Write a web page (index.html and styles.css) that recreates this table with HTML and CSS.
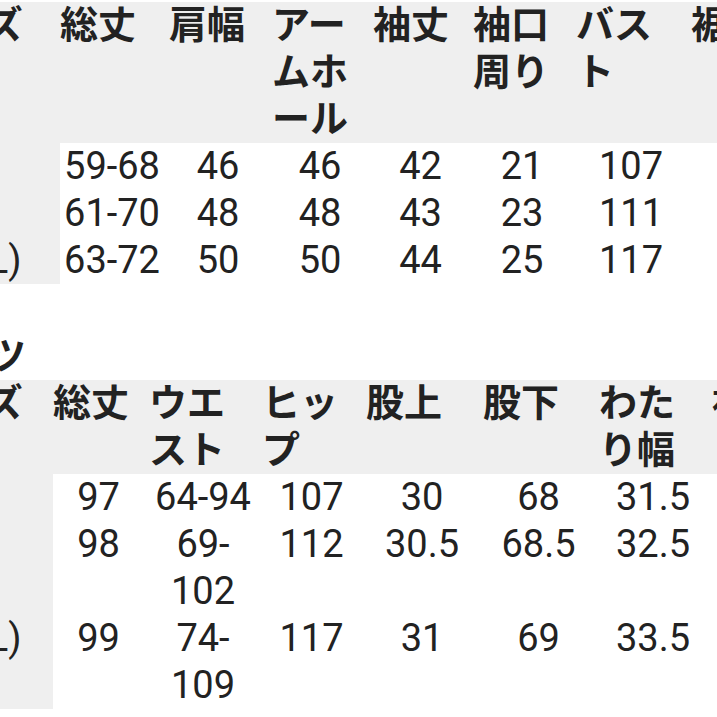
FILE: index.html
```html
<!DOCTYPE html>
<html lang="ja">
<head>
<meta charset="utf-8">
<title>サイズ表</title>
<link rel="stylesheet" href="styles.css">
</head>
<body>
<main class="page">
  <section class="size-table size-table--tops">
    <div class="cell head label">サイズ</div>
    <div class="cell head">総丈</div>
    <div class="cell head">肩幅</div>
    <div class="cell head">アームホール</div>
    <div class="cell head">袖丈</div>
    <div class="cell head">袖口周り</div>
    <div class="cell head">バスト</div>
    <div class="cell head">裾周り</div>

    <div class="cell label">S</div>
    <div class="cell">59-68</div>
    <div class="cell">46</div>
    <div class="cell">46</div>
    <div class="cell">42</div>
    <div class="cell">21</div>
    <div class="cell">107</div>
    <div class="cell">110</div>

    <div class="cell label">M</div>
    <div class="cell">61-70</div>
    <div class="cell">48</div>
    <div class="cell">48</div>
    <div class="cell">43</div>
    <div class="cell">23</div>
    <div class="cell">111</div>
    <div class="cell">114</div>

    <div class="cell label">XL(LL)</div>
    <div class="cell">63-72</div>
    <div class="cell">50</div>
    <div class="cell">50</div>
    <div class="cell">44</div>
    <div class="cell">25</div>
    <div class="cell">117</div>
    <div class="cell">120</div>
  </section>

  <h2 class="section-title">パンツ</h2>

  <section class="size-table size-table--pants">
    <div class="cell head label">サイズ</div>
    <div class="cell head">総丈</div>
    <div class="cell head">ウエスト</div>
    <div class="cell head">ヒップ</div>
    <div class="cell head">股上</div>
    <div class="cell head">股下</div>
    <div class="cell head">わたり幅</div>
    <div class="cell head">裾幅</div>

    <div class="cell label">S</div>
    <div class="cell">97</div>
    <div class="cell">64-94</div>
    <div class="cell">107</div>
    <div class="cell">30</div>
    <div class="cell">68</div>
    <div class="cell">31.5</div>
    <div class="cell">22</div>

    <div class="cell label">M</div>
    <div class="cell">98</div>
    <div class="cell">69-<wbr>102</div>
    <div class="cell">112</div>
    <div class="cell">30.5</div>
    <div class="cell">68.5</div>
    <div class="cell">32.5</div>
    <div class="cell">23</div>

    <div class="cell label">XL(LL)</div>
    <div class="cell">99</div>
    <div class="cell">74-<wbr>109</div>
    <div class="cell">117</div>
    <div class="cell">31</div>
    <div class="cell">69</div>
    <div class="cell">33.5</div>
    <div class="cell">24</div>
  </section>
</main>
</body>
</html>
```

FILE: styles.css
```css
html, body {
  margin: 0;
  padding: 0;
  background: #ffffff;
}

body {
  width: 717px;
  height: 717px;
  overflow: hidden;
  font-family: Roboto, "Noto Sans CJK JP", sans-serif;
  font-size: 38px;
  line-height: 47px;
  color: #222222;
}

.page {
  margin-left: -90px;
  padding-top: 2px;
  width: 1000px;
}

.size-table {
  display: grid;
}

.size-table--tops {
  grid-template-columns: 150px 109px 103px 101px 100px 103px 115px 130px;
}

.size-table--pants {
  grid-template-columns: 143px 96px 113px 104px 117px 116px 113px 120px;
}

.cell {
  padding: 0 5px 0 0;
  background: #ffffff;
  text-align: center;
  font-weight: 400;
}

.cell.head {
  background: #efefef;
  text-align: left;
  font-weight: 700;
  line-break: anywhere;
}

.cell.label {
  background: #efefef;
  text-align: left;
}

.section-title {
  margin: 49px 0 0 0;
  font-size: 38px;
  line-height: 47px;
  font-weight: 700;
}
```
